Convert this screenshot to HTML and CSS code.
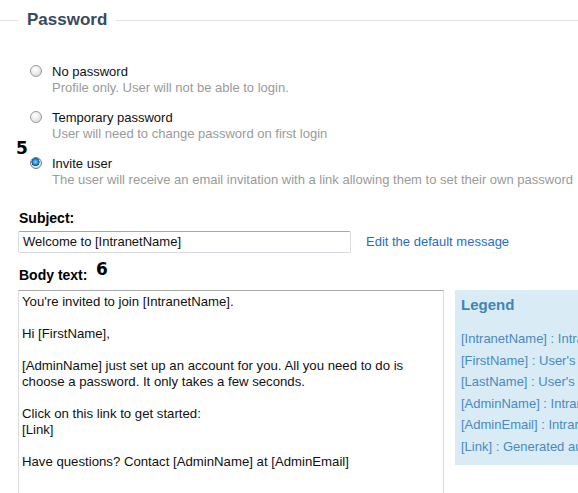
FILE: index.html
```html
<!DOCTYPE html>
<html>
<head>
<meta charset="utf-8">
<link rel="stylesheet" href="styles.css">
</head>
<body>
<div class="page">
  <div class="section-head">
    <span class="rule rule-left"></span>
    <h2 class="section-title">Password</h2>
    <span class="rule rule-right"></span>
  </div>

  <div class="options">
    <div class="option">
      <span class="radio"></span>
      <div class="option-text">
        <div class="option-label">No password</div>
        <div class="option-desc">Profile only. User will not be able to login.</div>
      </div>
    </div>
    <div class="option">
      <span class="radio"></span>
      <div class="option-text">
        <div class="option-label">Temporary password</div>
        <div class="option-desc">User will need to change password on first login</div>
      </div>
    </div>
    <div class="option">
      <span class="radio checked"></span>
      <div class="option-text">
        <div class="option-label">Invite user</div>
        <div class="option-desc">The user will receive an email invitation with a link allowing them to set their own password</div>
      </div>
    </div>
    <span class="marker marker-5">5</span>
  </div>

  <div class="field subject-field">
    <div class="field-label">Subject:</div>
    <div class="subject-row">
      <div class="input">Welcome to [IntranetName]</div>
      <a class="edit-link">Edit the default message</a>
    </div>
  </div>

  <div class="field body-field">
    <div class="field-label">Body text:</div>
    <span class="marker marker-6">6</span>
    <div class="body-row">
      <div class="textarea">
        <p>You're invited to join [IntranetName].</p>
        <p>Hi [FirstName],</p>
        <p>[AdminName] just set up an account for you. All you need to do is choose a password. It only takes a few seconds.</p>
        <p>Click on this link to get started:<br>[Link]</p>
        <p>Have questions? Contact [AdminName] at [AdminEmail]</p>
      </div>
      <div class="legend">
        <div class="legend-title">Legend</div>
        <div class="legend-item">[IntranetName] : Intranet name</div>
        <div class="legend-item">[FirstName] : User's first name</div>
        <div class="legend-item">[LastName] : User's last name</div>
        <div class="legend-item">[AdminName] : Intranet admin name</div>
        <div class="legend-item">[AdminEmail] : Intranet admin email</div>
        <div class="legend-item">[Link] : Generated automatically</div>
      </div>
    </div>
  </div>
</div>
</body>
</html>
```

FILE: styles.css
```css
html, body {
  margin: 0;
  padding: 0;
  background: #fff;
  overflow: hidden;
}
body {
  font-family: "Liberation Sans", Arial, sans-serif;
  font-size: 13px;
  color: #000;
  width: 578px;
  height: 493px;
}
.page {
  position: relative;
  width: 578px;
  height: 493px;
  overflow: hidden;
}
.section-head {
  display: flex;
  align-items: center;
  height: 40px;
}
.rule {
  height: 1px;
  background: #e2e2e2;
}
.rule-left { width: 18px; flex: none; }
.rule-right { flex: 1; }
.section-title {
  margin: 0 9px;
  font-size: 17px;
  font-weight: bold;
  color: #3a4a5d;
  line-height: 20px;
}
.options {
  position: relative;
  padding: 24px 0 0 30px;
  display: flex;
  flex-direction: column;
  gap: 14px;
}
.option {
  display: flex;
  align-items: flex-start;
  gap: 10px;
}
.radio {
  flex: none;
  width: 10px;
  height: 10px;
  margin-top: 1px;
  border-radius: 50%;
  border: 1px solid #9a9a9a;
  background: radial-gradient(circle at 40% 35%, #ffffff 0%, #eeeeee 45%, #cfcfcf 100%);
}
.radio.checked {
  background:
    radial-gradient(circle at 45% 40%, #8fd4ff 0%, #2a8fd6 30%, #0b4f8f 48%, transparent 52%),
    radial-gradient(circle at 40% 35%, #ffffff 0%, #eeeeee 45%, #cfcfcf 100%);
  border-color: #6d7f94;
}
.option-text {
  display: flex;
  flex-direction: column;
}
.option-label {
  line-height: 16px;
  color: #111;
}
.option-desc {
  line-height: 16px;
  color: #9a9a9a;
  white-space: nowrap;
}
.marker {
  position: absolute;
  font-family: "DejaVu Sans", "Liberation Sans", sans-serif;
  font-weight: bold;
  font-size: 17px;
  color: #000;
  line-height: 20px;
}
.marker-5 { left: 16px; top: 98px; }
.marker-6 { left: 96px; top: -7px; }
.field {
  padding-left: 18px;
}
.field-label {
  font-size: 14px;
  font-weight: bold;
  line-height: 18px;
  padding-left: 1px;
}
.subject-field {
  margin-top: 21px;
}
.subject-row {
  display: flex;
  align-items: center;
  margin-top: 4px;
  gap: 15px;
}
.input {
  box-sizing: border-box;
  width: 333px;
  height: 22px;
  border: 1px solid #d8dbe2;
  border-top-color: #a8a8a8;
  border-radius: 2px;
  padding: 2px 4px;
  line-height: 16px;
  font-size: 13px;
  color: #111;
}
.edit-link {
  color: #2b6dbd;
  font-size: 13px;
  line-height: 16px;
  text-decoration: none;
}
.body-field {
  position: relative;
  margin-top: 13px;
}
.body-row {
  display: flex;
  align-items: flex-start;
  gap: 11px;
  margin-top: 6px;
}
.textarea {
  box-sizing: border-box;
  flex: none;
  width: 426px;
  height: 240px;
  border: 1px solid #dcdde2;
  border-top-color: #a9a9a9;
  padding: 3px 3px;
  font-size: 13.2px;
  line-height: 16px;
  color: #111;
}
.textarea p {
  margin: 0 0 16px 0;
}
.legend {
  flex: none;
  width: 200px;
  background: #d9ecf6;
  padding: 6px 6px 8px 6px;
  white-space: nowrap;
}
.legend-title {
  font-size: 15px;
  font-weight: bold;
  color: #3f85b6;
  line-height: 18px;
  margin-bottom: 14px;
}
.legend-item {
  font-size: 13px;
  color: #4a89bd;
  line-height: 21.5px;
}
```
